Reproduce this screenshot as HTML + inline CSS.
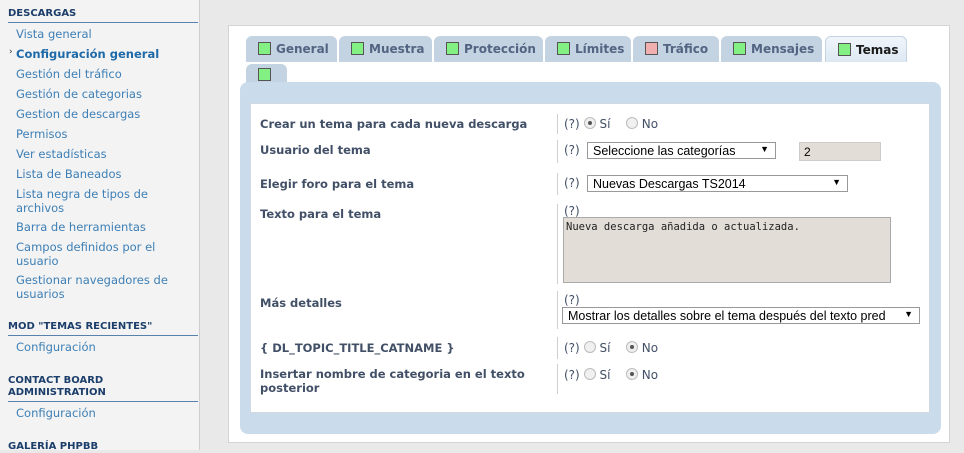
<!DOCTYPE html>
<html><head><meta charset="utf-8"><style>
*{margin:0;padding:0;box-sizing:border-box}
body{width:964px;height:450px;overflow:hidden;background:#e9e9ea;font-family:"DejaVu Sans",Verdana,sans-serif;position:relative}
.a{position:absolute;white-space:nowrap}
#side{position:absolute;left:0;top:0;width:200px;height:450px;background:#f3f3f3;border-right:1px solid #cfcfcf}
.h{position:absolute;left:8px;font-size:10px;font-weight:bold;color:#1c3e6b;line-height:12px}
.ln{position:absolute;left:8px;width:190px;height:1px;background:#5882ae}
.l{position:absolute;left:16px;font-size:11.5px;color:#3d7fb6;line-height:14px}
#panel{position:absolute;left:228px;top:25px;width:722px;height:418px;background:#fff;border:1px solid #d4d4d4}
.tab{position:absolute;top:36px;height:26px;background:#c3d3e2;border-radius:6px 6px 0 0;font-size:12px;font-weight:bold;color:#536482;padding:6px 0 0 12px;white-space:nowrap}
.tab i{display:inline-block;width:13px;height:13px;background:#83f083;border:1px solid #555;vertical-align:-2px;margin-right:5px}
#blue{position:absolute;left:240px;top:82px;width:701px;height:352px;background:#cadceb;border-radius:8px}
#white{position:absolute;left:250px;top:103px;width:680px;height:310px;background:#fff;border:1px solid #d0d8e0}
.lab{position:absolute;left:260px;font-size:11.5px;font-weight:bold;color:#425067;line-height:14px}
.vl{position:absolute;left:557px;width:1px;background:#cfcfcf}
.q{position:absolute;font-size:12px;color:#425067;white-space:nowrap}
.r{display:inline-block;width:12px;height:12px;border-radius:50%;border:1px solid #bbb;background:#f0f0f0;vertical-align:-1px;position:relative;margin-left:4px}
.r.on::after{content:"";position:absolute;left:3px;top:3px;width:4px;height:4px;border-radius:50%;background:#555}
.sel{position:absolute;height:17px;border:1px solid #999;background:#fff;color:#000;padding:1px 0 0 5px;white-space:nowrap;overflow:hidden;font-family:"Liberation Sans",Arial,sans-serif;font-size:12.5px}
.sel b{position:absolute;right:6px;top:1px;font-size:9px}
</style></head><body>
<div id="side">
<div class="h" style="top:8px">DESCARGAS</div><div class="ln" style="top:22px"></div>
<div class="l" style="top:27px">Vista general</div>
<div class="a" style="left:9px;top:47px;font-size:9px;color:#333">›</div>
<div class="l" style="top:47px;font-weight:bold;color:#1e6aa8">Configuración general</div>
<div class="l" style="top:67px">Gestión del tráfico</div>
<div class="l" style="top:87px">Gestión de categorias</div>
<div class="l" style="top:107px">Gestion de descargas</div>
<div class="l" style="top:127px">Permisos</div>
<div class="l" style="top:147px">Ver estadísticas</div>
<div class="l" style="top:167px">Lista de Baneados</div>
<div class="l" style="top:187px">Lista negra de tipos de<br>archivos</div>
<div class="l" style="top:220px">Barra de herramientas</div>
<div class="l" style="top:240px">Campos definidos por el<br>usuario</div>
<div class="l" style="top:273px">Gestionar navegadores de<br>usuarios</div>
<div class="h" style="top:321px">MOD "TEMAS RECIENTES"</div><div class="ln" style="top:335px"></div>
<div class="l" style="top:340px">Configuración</div>
<div class="h" style="top:375px">CONTACT BOARD<br>ADMINISTRATION</div><div class="ln" style="top:401px"></div>
<div class="l" style="top:406px">Configuración</div>
<div class="h" style="top:441px">GALERÍA PHPBB</div>
</div>
<div id="panel"></div>
<div class="tab" style="left:246px;width:91px"><i></i>General</div>
<div class="tab" style="left:339px;width:93px"><i></i>Muestra</div>
<div class="tab" style="left:434px;width:109px"><i></i>Protección</div>
<div class="tab" style="left:545px;width:86px"><i></i>Límites</div>
<div class="tab" style="left:633px;width:86px"><i style="background:#f0b0b0"></i>Tráfico</div>
<div class="tab" style="left:721px;width:101px"><i></i>Mensajes</div>
<div class="tab" style="left:825px;width:82px;background:linear-gradient(#f0f5fa,#dde8f2);color:#1a1a1a;border:1px solid #c3d3e2;border-bottom:none"><i></i>Temas</div>
<div class="tab" style="left:246px;top:64px;width:41px;height:20px;padding-top:4px"><i></i></div>
<div id="blue"></div>
<div id="white"></div>

<div class="lab" style="top:117px">Crear un tema para cada nueva descarga</div>
<div class="vl" style="top:114px;height:20px"></div>
<div class="q" style="left:564px;top:117px">(?)<span class="r on"></span> Sí &nbsp;&nbsp;<span class="r"></span> No</div>

<div class="lab" style="top:143px">Usuario del tema</div>
<div class="vl" style="top:140px;height:23px"></div>
<div class="q" style="left:564px;top:143px">(?)</div>
<div class="sel" style="left:587px;top:142px;width:189px">Seleccione las categorías<b>▼</b></div>
<div class="a" style="left:799px;top:142px;width:82px;height:19px;background:#e2ddd7;border:1px solid #ccc;font-size:12px;padding:2px 4px;font-family:'Liberation Sans',sans-serif">2</div>

<div class="lab" style="top:177px">Elegir foro para el tema</div>
<div class="vl" style="top:173px;height:22px"></div>
<div class="q" style="left:564px;top:176px">(?)</div>
<div class="sel" style="left:587px;top:175px;width:261px">Nuevas Descargas TS2014<b>▼</b></div>

<div class="lab" style="top:207px">Texto para el tema</div>
<div class="vl" style="top:204px;height:80px"></div>
<div class="q" style="left:564px;top:204px">(?)</div>
<div class="a" style="left:563px;top:217px;width:328px;height:66px;background:#e2ddd7;border:1px solid #aaa;font-family:'DejaVu Sans Mono',monospace;font-size:10.5px;padding:3px 2px;color:#222">Nueva descarga añadida o actualizada.</div>

<div class="lab" style="top:296px">Más detalles</div>
<div class="vl" style="top:291px;height:38px"></div>
<div class="q" style="left:564px;top:293px">(?)</div>
<div class="sel" style="left:562px;top:307px;width:358px">Mostrar los detalles sobre el tema después del texto pred<b>▼</b></div>

<div class="lab" style="top:341px">{ DL_TOPIC_TITLE_CATNAME }</div>
<div class="vl" style="top:337px;height:22px"></div>
<div class="q" style="left:564px;top:341px">(?)<span class="r"></span> Sí &nbsp;&nbsp;<span class="r on"></span> No</div>

<div class="lab" style="top:367px">Insertar nombre de categoria en el texto<br>posterior</div>
<div class="vl" style="top:364px;height:30px"></div>
<div class="q" style="left:564px;top:368px">(?)<span class="r"></span> Sí &nbsp;&nbsp;<span class="r on"></span> No</div>
</body></html>
